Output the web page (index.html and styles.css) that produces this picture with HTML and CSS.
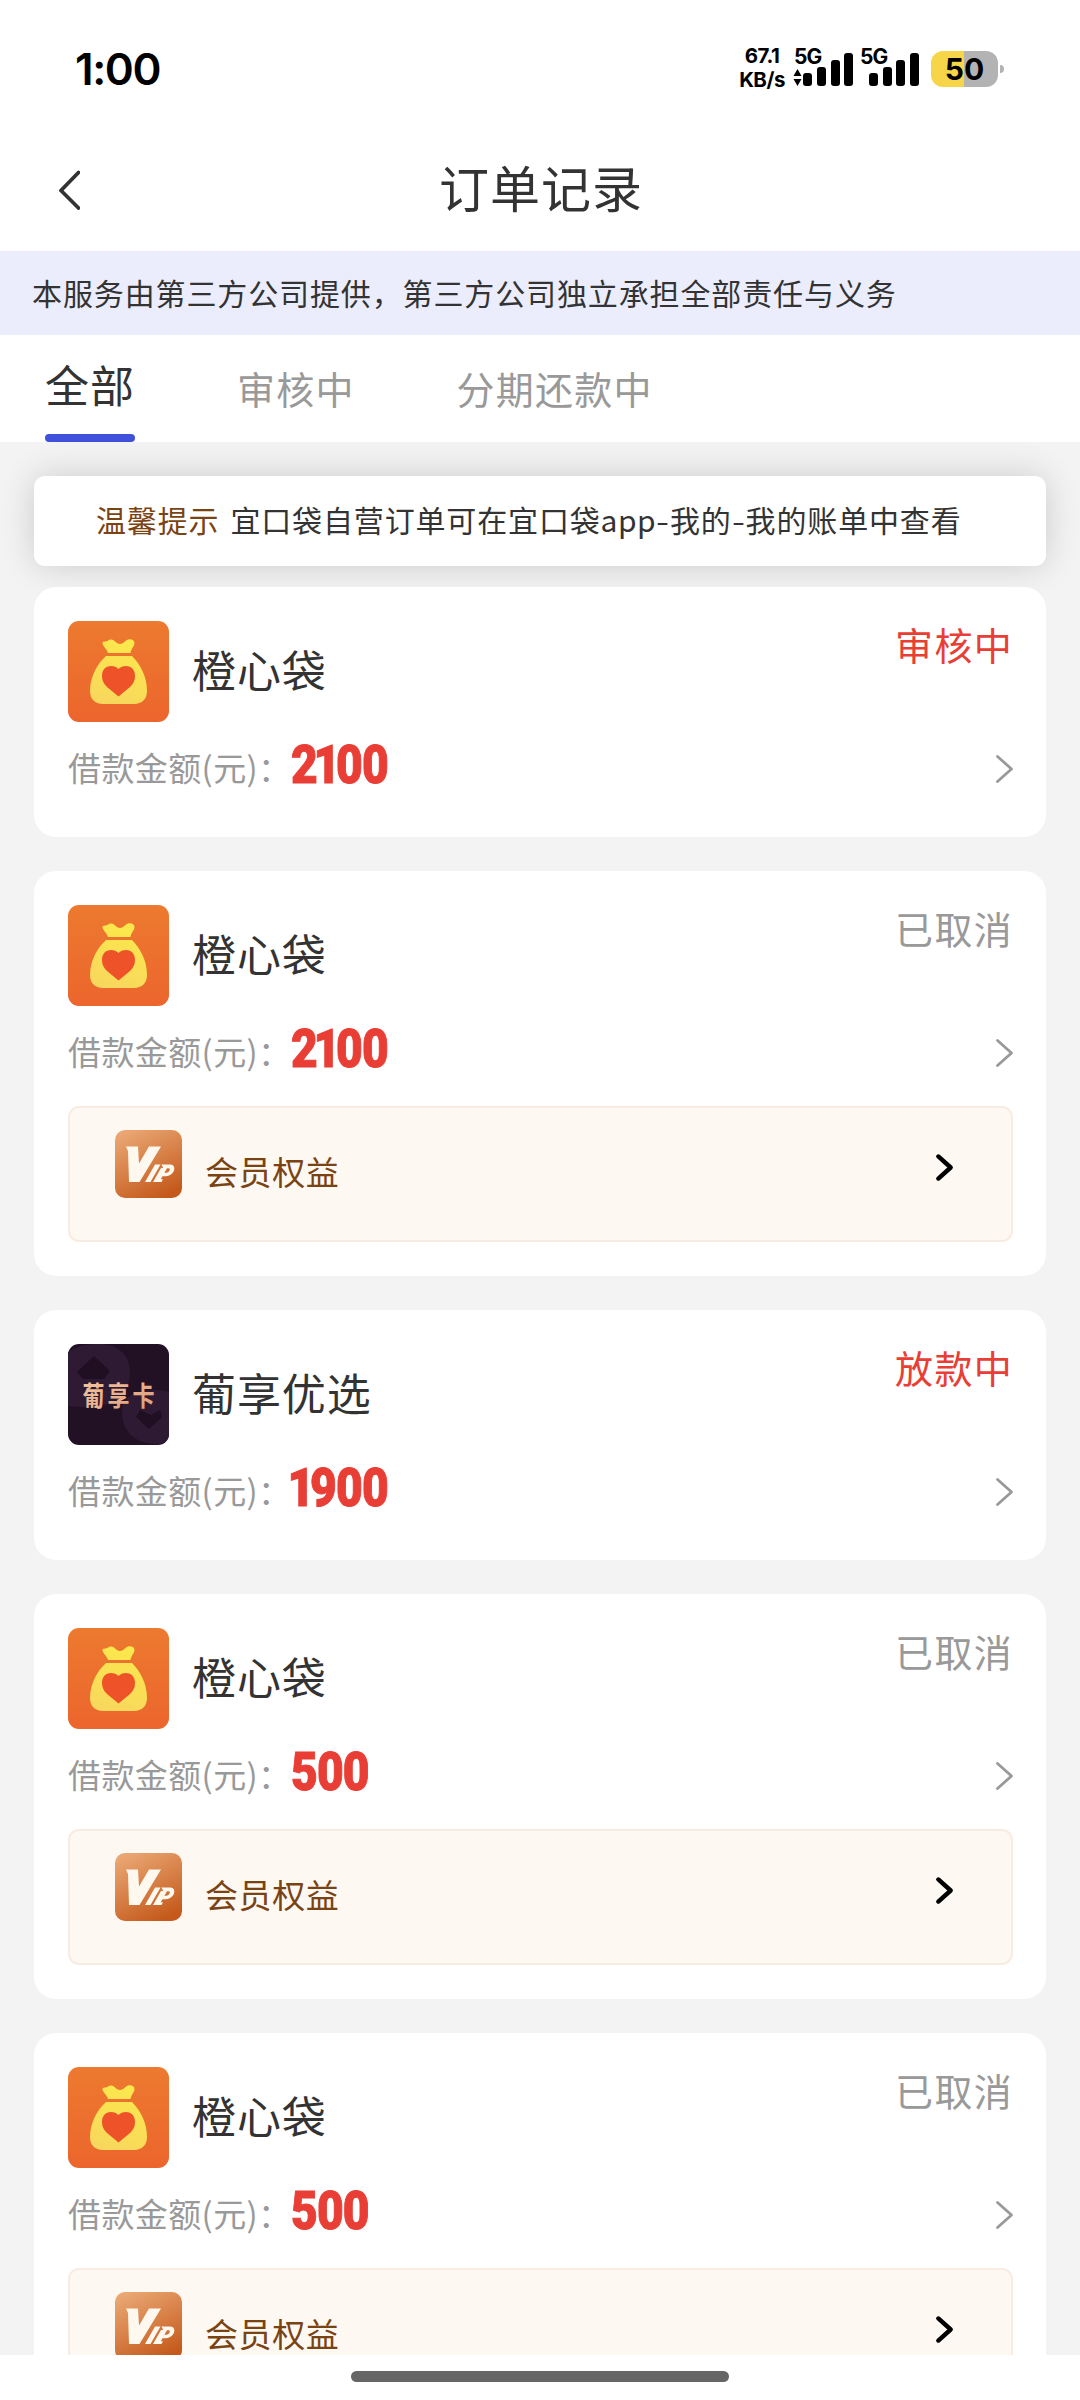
FILE: index.html
```html
<!DOCTYPE html>
<html lang="zh-CN">
<head>
<meta charset="utf-8">
<title>订单记录</title>
<link rel="stylesheet" href="styles.css">
</head>
<body>
<svg class="defs" width="0" height="0" aria-hidden="true">
  <defs>
    <linearGradient id="orange" x1="0" y1="0" x2="0" y2="1"><stop offset="0" stop-color="#ec7a2f"/><stop offset="1" stop-color="#ec652d"/></linearGradient>
    <linearGradient id="gold" x1="0.8" y1="0" x2="0.5" y2="1"><stop offset="0" stop-color="#fbe94b"/><stop offset="1" stop-color="#f8d85c"/></linearGradient>
    <linearGradient id="bronze" x1="0.2" y1="0" x2="0.7" y2="1"><stop offset="0" stop-color="#eaa773"/><stop offset="1" stop-color="#c4591b"/></linearGradient>
    <linearGradient id="copper" x1="0" y1="0" x2="1" y2="1"><stop offset="0" stop-color="#f6c9a2"/><stop offset="1" stop-color="#d99a77"/></linearGradient>
  </defs>
  <symbol id="bag" viewBox="0 0 101 101">
    <rect width="101" height="101" rx="11" fill="url(#orange)"/>
    <path fill="url(#gold)" d="M34.500 22c0-2 3-1 5-2 2-2 5-2 7 0 4 4 7 4 11 0 3-3 9-2 9 2 0 3-3 5-4 10H40c-1-4-5.500-7-5.500-10zM38 35h26c8 8 15 20 15 35 0 8-5 13-13 13H35c-8 0-13-5-13-13 0-15 8-28 16-35z"/>
    <path fill="#ee5228" d="M50.500 48c5-5 16.500-4 16.500 7 0 5-2 8-5 11L50.500 75.500 39 66c-3-3-5-6-5-11 0-11 11.500-12 16.500-7z"/>
  </symbol>
  <symbol id="vip" viewBox="0 0 67 68">
    <rect width="67" height="68" rx="10" fill="url(#bronze)"/>
    <path fill="#fff8ef" d="M11 16.500h12l1 17 10-17h12L24.500 52H14l-1-31z"/>
    <path fill="#fff8ef" fill-rule="evenodd" d="M40 34.500h5.500L35.500 52H30zM46.500 34.500H55c5 0 5.500 5 2.500 8.500-1.500 2-4 3.200-7 3.200h-3l-1.800 3h2.300l-1.500 2.800h-8.500l8-14h2.200zM52 38.300l-2.600 4.500h2c3 0 4.600-4.500 2.400-4.500z"/>
  </symbol>
  <symbol id="next" viewBox="0 0 17 28" overflow="visible"><path d="M1.500 1.500 15.500 14 1.500 26.500" fill="none" stroke="currentColor" stroke-linecap="round" stroke-linejoin="round"/></symbol>
</svg>

<div class="screen">
  <header class="statusbar">
    <span class="time">1:00</span>
    <div class="indicators">
      <div class="speed"><span>67.1</span><span>KB/s</span></div>
      <svg class="signals" width="126" height="40" viewBox="0 0 126 40">
        <g class="net"><text x="0" y="16">5G</text><text x="66" y="16">5G</text></g>
        <path d="m3.500 21 4 7h-8zM3.500 38l4-7h-8z"/>
        <rect x="9" y="25" width="9" height="13" rx="3"/><rect x="23" y="19" width="9" height="19" rx="3"/><rect x="37" y="12" width="9" height="26" rx="3"/><rect x="50" y="5" width="9" height="33" rx="3"/>
        <rect x="75" y="25" width="9" height="13" rx="3"/><rect x="89" y="19" width="9" height="19" rx="3"/><rect x="102" y="12" width="9" height="26" rx="3"/><rect x="116" y="5" width="9" height="33" rx="3"/>
      </svg>
      <div class="battery"><span>50</span></div>
      <i class="battery-tip"></i>
    </div>
  </header>

  <nav class="titlebar">
    <svg width="24" height="40" viewBox="0 0 24 40"><path d="M22.500 2.500 5 20.500 22.500 38" fill="none" stroke="#333" stroke-width="3.800" stroke-linecap="round" stroke-linejoin="round"/></svg>
    <h1>订单记录</h1>
  </nav>

  <p class="notice">本服务由第三方公司提供，第三方公司独立承担全部责任与义务</p>

  <div class="tabs">
    <span class="tab active">全部</span>
    <span class="tab">审核中</span>
    <span class="tab">分期还款中</span>
  </div>

  <main class="list">
    <div class="tip"><span class="tip-tag">温馨提示</span><span>宜口袋自营订单可在宜口袋<span class="latin">app</span><span class="dash">-</span>我的<span class="dash">-</span>我的账单中查看</span></div>

    <article class="card">
      <div class="head"><svg class="logo"><use href="#bag"/></svg><h2>橙心袋</h2><span class="status red">审核中</span></div>
      <div class="amount"><span class="label">借款金额(元)：</span><b>2<span class="one">1</span>00</b><svg class="next"><use href="#next"/></svg></div>
    </article>

    <article class="card">
      <div class="head"><svg class="logo"><use href="#bag"/></svg><h2>橙心袋</h2><span class="status">已取消</span></div>
      <div class="amount"><span class="label">借款金额(元)：</span><b>2<span class="one">1</span>00</b><svg class="next"><use href="#next"/></svg></div>
      <div class="benefit"><svg class="vip"><use href="#vip"/></svg><span>会员权益</span><svg class="next"><use href="#next"/></svg></div>
    </article>

    <article class="card">
      <div class="head">
        <svg class="logo" viewBox="0 0 101 101">
          <clipPath id="round"><rect width="101" height="101" rx="11"/></clipPath>
          <g clip-path="url(#round)">
            <rect width="101" height="101" fill="#221024"/>
            <path d="M0 8C20-5 62-5 62 28S30 66 0 62zM84 46c24 0 34 8 34 28s-14 26-30 26c-22 0-34-14-34-32 0-14 12-22 30-22z" fill="#2e1a32"/>
            <path d="M26 12 42 27 36 35H15L9 28zM72 66l11 5 9-5 2 7-13 12-13-12z" fill="#200e22"/>
            <text class="logo-text" transform="translate(14.500 61.500) scale(1 1.250)" fill="url(#copper)">葡享卡</text>
          </g>
        </svg>
        <h2>葡享优选</h2><span class="status red">放款中</span>
      </div>
      <div class="amount"><span class="label">借款金额(元)：</span><b><span class="one">1</span>900</b><svg class="next"><use href="#next"/></svg></div>
    </article>

    <article class="card">
      <div class="head"><svg class="logo"><use href="#bag"/></svg><h2>橙心袋</h2><span class="status">已取消</span></div>
      <div class="amount"><span class="label">借款金额(元)：</span><b>500</b><svg class="next"><use href="#next"/></svg></div>
      <div class="benefit"><svg class="vip"><use href="#vip"/></svg><span>会员权益</span><svg class="next"><use href="#next"/></svg></div>
    </article>

    <article class="card">
      <div class="head"><svg class="logo"><use href="#bag"/></svg><h2>橙心袋</h2><span class="status">已取消</span></div>
      <div class="amount"><span class="label">借款金额(元)：</span><b>500</b><svg class="next"><use href="#next"/></svg></div>
      <div class="benefit"><svg class="vip"><use href="#vip"/></svg><span>会员权益</span><svg class="next"><use href="#next"/></svg></div>
    </article>
  </main>

  <footer class="homebar"><i></i></footer>
</div>
</body>
</html>
```
FILE: styles.css
```css
* { box-sizing: border-box; margin: 0; padding: 0; }
body { font-family: "Noto Sans CJK SC", sans-serif; color: #333; background: #fff; }
.defs { position: absolute; }
svg { display: block; flex: none; }
.screen { width: 1080px; height: 2400px; display: flex; flex-direction: column; overflow: hidden; }

.statusbar { height: 129px; flex: none; display: flex; justify-content: space-between; padding: 0 76px 0 75px; color: #000; font-family: Inter, sans-serif; }
.time { font-size: 44px; font-weight: 600; line-height: 54px; padding-top: 42px; letter-spacing: -1.4px; }
.indicators { display: flex; align-items: flex-start; padding-top: 48px; }
.speed { display: flex; flex-direction: column; align-items: center; width: 46px; margin-right: 9px; font-size: 20.500px; font-weight: 700; line-height: 24px; letter-spacing: -.5px; margin-top: -4px; }
.net { font-size: 21px; font-weight: 700; letter-spacing: -1px; }
.signals { overflow: visible; }
.battery { width: 67px; height: 36px; margin: 3px 0 0 11px; border-radius: 12px; background: linear-gradient(90deg, #f7d548 50%, #b3b3b3 50%); font-size: 30px; font-weight: 700; line-height: 36px; text-align: center; }
.battery-tip { width: 4px; height: 8px; margin: 17px 0 0 2px; border-radius: 0 4px 4px 0; background: #b3b3b3; }

.titlebar { height: 122px; flex: none; display: grid; grid-template-columns: 80px 1fr 80px; align-items: center; padding: 0 56px; }
.titlebar h1 { text-align: center; font-size: 50px; letter-spacing: 1px; font-weight: 400; line-height: 60px; padding: 0 0 9px 2px; }
.notice { height: 84px; flex: none; padding-left: 32px; background: #ebedfd; font-size: 30px; letter-spacing: .88px; line-height: 82px; white-space: nowrap; }

.tabs { height: 107px; flex: none; display: flex; gap: 102px; padding-left: 45px; }
.tab { color: #999; font-size: 38px; letter-spacing: 1.2px; line-height: 106px; }
.tab.active { display: flex; flex-direction: column; color: #333; font-size: 44px; letter-spacing: 1px; line-height: 99px; }
.tab.active::after { content: ""; height: 8px; border-radius: 4px; background: #3f51db; }

.list { flex: 1; min-height: 0; overflow: hidden; display: flex; flex-direction: column; gap: 34px; padding: 34px 34px 0; background: #f3f3f3; }
.tip { flex: none; height: 90px; margin-bottom: -13px; padding-left: 62px; display: flex; gap: 11px; border-radius: 11px; background: #fff; box-shadow: 0 0 34px rgba(0, 0, 0, .16); font-size: 30px; letter-spacing: .85px; line-height: 87px; white-space: nowrap; }
.tip-tag { color: #7a4314; }
.latin { letter-spacing: .4px; }
.dash { display: inline-block; width: 14px; text-align: center; transform: scaleX(1.25); }
.card { flex: none; padding: 34px; border-radius: 22px; background: #fff; }
.head { display: flex; height: 101px; }
.logo { width: 101px; height: 101px; }
.logo-text { font-size: 22px; font-weight: 700; letter-spacing: 3px; }
.head h2 { flex: 1; padding-left: 23px; font-size: 44px; letter-spacing: .9px; font-weight: 400; line-height: 96px; }
.status { color: #999; font-size: 38px; letter-spacing: 1.3px; line-height: 45px; margin-right: -1px; }
.red { color: #e93e35; }
.amount { display: flex; align-items: center; height: 81px; padding-top: 12px; color: #999; }
.label { width: 223px; font-size: 33px; letter-spacing: .4px; line-height: 66px; padding-bottom: 4px; white-space: nowrap; }
.amount b { flex: 1; color: #e93e35; font: 900 54px/69px Roboto, sans-serif; letter-spacing: -1px; transform: scaleX(.855); transform-origin: 0 50%; margin-top: -8px; -webkit-text-stroke: 1px #e93e35; }
.one { margin: 0 -4px; }
.one:first-child:not(:only-child) { margin-left: 0; }
.next { width: 17px; height: 28px; overflow: visible; stroke-width: 2.800px; }
.amount .next { margin-right: -1px; }
.benefit { display: flex; align-items: flex-start; height: 136px; margin: 19px -1px 0 0; padding: 22px 59px 0 45px; border: 2px solid #f8ece2; border-radius: 11px; background: #fdf8f1; color: #7a4314; font-size: 33px; letter-spacing: .6px; }
.vip { width: 67px; height: 68px; }
.benefit span { flex: 1; padding-left: 23px; line-height: 82px; }
.benefit .next { width: 15px; height: 25px; margin-top: 25px; color: #000; stroke-width: 5px; }

.homebar { height: 45px; flex: none; display: flex; justify-content: center; padding-top: 16px; background: #fff; }
.homebar i { width: 378px; height: 11px; border-radius: 6px; background: #666; }
```
